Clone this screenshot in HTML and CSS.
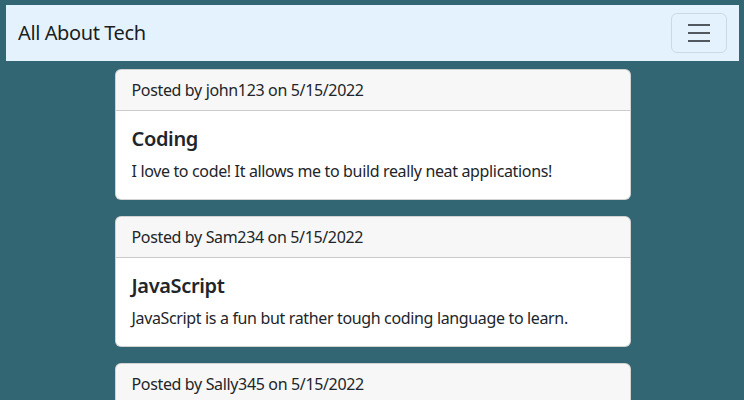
FILE: index.html
```html
<!DOCTYPE html>
<html>
<head>
<meta charset="utf-8">
<link rel="stylesheet" href="styles.css">
</head>
<body>
<div class="page">
  <nav class="navbar">
    <span class="brand">All About Tech</span>
    <button class="toggler" aria-label="Toggle navigation">
      <svg width="30" height="30" viewBox="0 0 30 30"><path d="M4 7h22M4 15h22M4 23h22" stroke="rgba(33,37,41,0.75)" stroke-width="2" stroke-linecap="butt"/></svg>
    </button>
  </nav>
  <main class="posts">
    <article class="card">
      <div class="card-header">Posted by john123 on 5/15/2022</div>
      <div class="card-body">
        <h5 class="card-title">Coding</h5>
        <p class="card-text">I love to code! It allows me to build really neat applications!</p>
      </div>
    </article>
    <article class="card">
      <div class="card-header">Posted by Sam234 on 5/15/2022</div>
      <div class="card-body">
        <h5 class="card-title">JavaScript</h5>
        <p class="card-text">JavaScript is a fun but rather tough coding language to learn.</p>
      </div>
    </article>
    <article class="card">
      <div class="card-header">Posted by Sally345 on 5/15/2022</div>
      <div class="card-body card-body-empty"></div>
    </article>
  </main>
</div>
</body>
</html>
```

FILE: styles.css
```css
* { box-sizing: border-box; }
html, body { margin: 0; padding: 0; }
body {
  background: #336673;
  font-family: "Noto Sans", "Open Sans", sans-serif;
  font-size: 16px;
  line-height: 1.5;
  letter-spacing: -0.35px;
  color: #212529;
  height: 400px;
  overflow: hidden;
}
.page {
  padding: 5px 5px 0 6px;
}
.navbar {
  background: #e3f2fd;
  display: flex;
  align-items: center;
  justify-content: space-between;
  padding: 8px 12px;
}
.brand {
  font-size: 20px;
  line-height: 30px;
  letter-spacing: -0.4px;
  color: rgba(0,0,0,0.9);
}
.toggler {
  display: flex;
  padding: 4px 12px;
  background: transparent;
  border: 1px solid rgba(0,0,0,0.1);
  border-radius: 6px;
  line-height: 1;
}
.toggler svg { display: block; }
.posts {
  width: 516px;
  margin: 8px auto 0;
  display: flex;
  flex-direction: column;
  gap: 16px;
}
.card {
  background: #fff;
  border: 1px solid rgba(0,0,0,0.175);
  border-radius: 6px;
  overflow: hidden;
}
.card-header {
  background: rgba(0,0,0,0.03);
  border-bottom: 1px solid rgba(0,0,0,0.175);
  padding: 8px 16px;
}
.card-body {
  padding: 16px;
}
.card-body-empty {
  min-height: 88px;
}
.card-title {
  margin: 0 0 8px;
  font-size: 20px;
  line-height: 1.2;
  font-weight: 600;
}
.card-text {
  margin: 0;
}
```
